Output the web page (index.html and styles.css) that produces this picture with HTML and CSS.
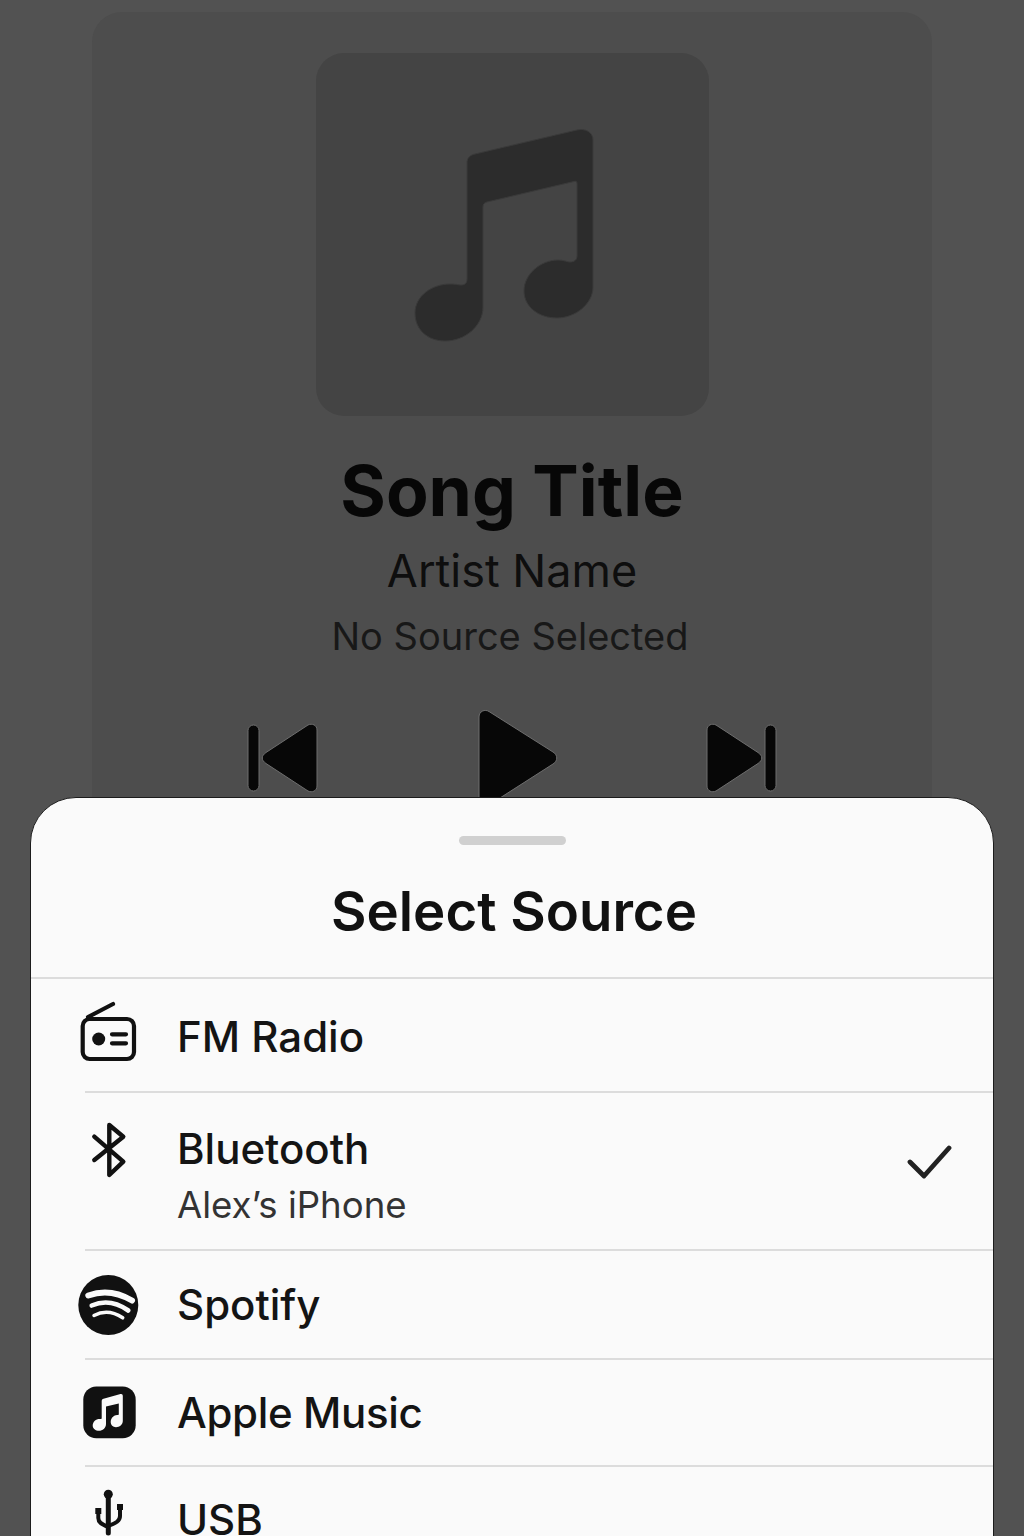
FILE: index.html
```html
<!DOCTYPE html>
<html>
  <head>
    <link rel="stylesheet" href="styles.css">
  </head>
  <body>
    <div id="player">
      <div id="art">
        <svg class="art-note" viewBox="0 0 178 212" width="178" height="212">
          <path d="M52 34C52 29 55 26 60 25L162 1C170 -1 178 3 178 11V158C178 175 160 189 142 189C124 189 109 178 109 162C109 145 126 131 143 131C149 131 152 133 155 133C159 133 162 131 162 127V55C162 52 161 52 159 52.5L72 73C69 74 68 75 68 78V178C68 197 50 212 30 212C13 212 0 201 0 184C0 167 17 155 35 155C41 155 43 156 46 156C50 156 52 154 52 150Z"/>
        </svg>
      </div>
      <h1 class="song-title">Song Title</h1>
      <div class="song-artist">Artist Name</div>
      <div class="song-source">No Source Selected</div>
      <div id="controls">
        <svg viewBox="0 0 70 68" width="70" height="68"><rect x="0" y="1" width="11" height="66" rx="5.5"/><path d="M18 28.5 60 1C64-1 69 1 69 6V62C69 67 64 69 60 67L18 39.5C13 36 13 32 18 28.5z"/></svg>
        <svg class="btn-play" viewBox="0 0 79 96" width="79" height="96"><path d="M0 7C0 1 6-1 10 1.500L74 42C79 45 79 51 74 54L10 95C6 97 0 95 0 89z"/></svg>
        <svg viewBox="0 0 70 68" width="70" height="68"><rect x="59" y="1" width="11" height="66" rx="5.5"/><path d="M52 28.500 10 1C6-1 1 1 1 6V62C1 67 6 69 10 67L52 39.500C57 36 57 32 52 28.500z"/></svg>
      </div>
    </div>

    <div id="sheet">
      <div class="handle"></div>
      <h2 class="sheet-title">Select Source</h2>
      <div class="source source-first">
        <svg class="source-icon" viewBox="0 0 60 60" width="60" height="60" fill="none" stroke="#111" stroke-width="4.200" stroke-linecap="round" stroke-linejoin="round">
          <rect x="4.700" y="14" width="51.300" height="40" rx="7"/>
          <path d="M10 12 35 -1"/>
          <circle cx="20.700" cy="34" r="6.500" fill="#111" stroke="none"/>
          <path d="M34 29.300H48M34 38.300H48"/>
        </svg>
        <div class="source-text"><div class="source-name">FM Radio</div></div>
      </div>
      <div class="source source-bt">
        <svg class="source-icon" viewBox="0 0 60 60" width="60" height="60" fill="none" stroke="#111" stroke-width="4.400" stroke-linecap="round" stroke-linejoin="round">
          <path d="M16.300 16.700 45.300 41.700 31.300 55V5L45.300 16.700 16.300 40"/>
        </svg>
        <div class="source-text">
          <div class="source-name">Bluetooth</div>
          <div class="source-sub">Alex’s iPhone</div>
        </div>
        <svg class="source-check" viewBox="0 0 46 38" width="46" height="38" fill="none" stroke="#222" stroke-width="4.800" stroke-linecap="round" stroke-linejoin="round"><path d="M3 18 17 32 42 4"/></svg>
      </div>
      <div class="source">
        <svg class="source-icon" viewBox="0 0 60 60" width="60" height="60" fill="none" stroke="#fafafa" stroke-linecap="round">
          <circle cx="30.300" cy="30" r="30" fill="#111" stroke="none"/>
          <path d="M10.300 20.500Q32 12.500 54 25.500" stroke-width="6"/>
          <path d="M13.700 30.500Q32 22.500 50.300 35.500" stroke-width="4.600"/>
          <path d="M16 40.500Q30 33 44.700 42.800" stroke-width="3.500"/>
        </svg>
        <div class="source-text"><div class="source-name">Spotify</div></div>
      </div>
      <div class="source source-apple">
        <svg class="source-icon" viewBox="0 0 60 60" width="60" height="60">
          <rect x="5.300" y="3.500" width="52.400" height="51.700" rx="13" fill="#111"/>
          <path d="M23.700 18C23.700 16.800 24.500 16 25.500 15.800L42.500 11C44 10.600 44.800 11.500 44.800 13V38C44.800 41.500 41.500 44.200 38 44.200C35 44.200 32.700 42 32.700 39C32.700 35 36 32 39 32C40.200 32 40.800 32.200 40.800 31V20.500L28 23.400V41C28 45 24.500 47.800 21 47.800C17.500 47.800 14.700 45.700 14.700 42.500C14.700 38.700 18 36 21.500 36C23 36 23.700 36.300 23.700 35z" fill="#fafafa"/>
        </svg>
        <div class="source-text"><div class="source-name">Apple Music</div></div>
      </div>
      <div class="source source-usb">
        <svg class="source-icon" viewBox="0 0 60 60" width="60" height="60" fill="none" stroke="#111" stroke-width="4" stroke-linecap="round" stroke-linejoin="round">
          <path d="M30.300 6V43" stroke-width="5"/>
          <path d="M20.300 22V28C20.300 32 23 34 30.300 37M42 18V26C42 31 38 33 30.300 36"/>
          <circle cx="30.300" cy="4.300" r="4.500" fill="#111" stroke="none"/>
          <rect x="17.300" y="18" width="6" height="6" fill="#111" stroke="none"/>
          <rect x="39" y="14" width="6" height="6" fill="#111" stroke="none"/>
        </svg>
        <div class="source-text"><div class="source-name">USB</div></div>
      </div>
    </div>
  </body>
</html>
```

FILE: styles.css
```css
html, body {
  margin: 0;
  padding: 0;
}

body {
  position: relative;
  height: 1536px;
  overflow: hidden;
  background: #525252;
  font-family: Inter, "Liberation Sans", sans-serif;
}

#player {
  box-sizing: border-box;
  width: 840px;
  height: 1600px;
  margin: 12px auto 0;
  padding-top: 41px;
  background: #4d4d4d;
  border-radius: 30px;
  display: flex;
  flex-direction: column;
  align-items: center;
}

#art {
  width: 393px;
  height: 363px;
  background: #444;
  border-radius: 28px;
  display: flex;
  justify-content: center;
  align-items: center;
}

.art-note {
  fill: #2c2c2c;
  stroke: #3a3a3a;
  stroke-width: 1;
  overflow: visible;
  margin-right: 17px;
}

.song-title {
  margin: 33px 0 0;
  font-size: 69.600px;
  line-height: 84px;
  font-weight: 700;
  color: #070707;
}

.song-artist {
  margin-top: 12px;
  font-size: 45px;
  line-height: 52px;
  color: #0e0e0e;
}

.song-source {
  margin-top: 18px;
  margin-right: 4px;
  font-size: 38px;
  line-height: 42px;
  color: #181818;
}

#controls {
  margin-top: 53px;
  width: 528px;
  display: flex;
  justify-content: space-between;
  align-items: center;
  fill: #070707;
  stroke: #6e6e6e;
  stroke-width: 1;
}

#controls svg {
  overflow: visible;
}

.btn-play {
  margin-left: 12px;
}

#sheet {
  position: absolute;
  top: 797px;
  left: 30px;
  right: 30px;
  bottom: -40px;
  box-sizing: border-box;
  background: #fafafa;
  border: 1px solid #1c1c1c;
  border-radius: 46px 46px 0 0;
  overflow: hidden;
}

.handle {
  width: 107px;
  height: 9px;
  margin: 38px auto 0;
  background: #d0d0d0;
  border-radius: 5px;
}

.sheet-title {
  margin: 29px 0 0;
  padding-left: 4px;
  text-align: center;
  font-size: 54.600px;
  line-height: 74px;
  font-weight: 600;
  color: #111;
}

.source {
  box-sizing: border-box;
  display: flex;
  align-items: center;
  height: 109px;
  margin-left: 54px;
  padding-right: 40px;
  border-top: 2px solid #dcdcdc;
}

.source-first {
  margin-top: 29px;
  margin-left: 0;
  padding-left: 54px;
  height: 114px;
}

.source-first .source-text {
  padding-top: 4px;
}

.source-bt {
  height: 158px;
  align-items: flex-start;
  padding-top: 30px;
}

.source-bt .source-icon {
  margin-top: -3px;
}

.source-apple {
  height: 107px;
}

.source-apple .source-name {
  letter-spacing: -.35px;
}

.source-usb {
  height: 69px;
  align-items: flex-start;
  padding-top: 23px;
}

.source-usb .source-text {
  padding-top: 14px;
}

.source-usb .source-name {
  line-height: 32px;
}

.source-icon {
  flex: none;
  overflow: visible;
  margin-left: -7px;
  margin-right: 39px;
}

.source-text {
  flex: 1;
}

.source-name {
  font-size: 42px;
  line-height: 52px;
  font-weight: 500;
  color: #141414;
}

.source-sub {
  margin-top: 8px;
  font-size: 36.600px;
  line-height: 44px;
  color: #333;
}

.source-check {
  flex: none;
  margin-top: 21px;
}
```
